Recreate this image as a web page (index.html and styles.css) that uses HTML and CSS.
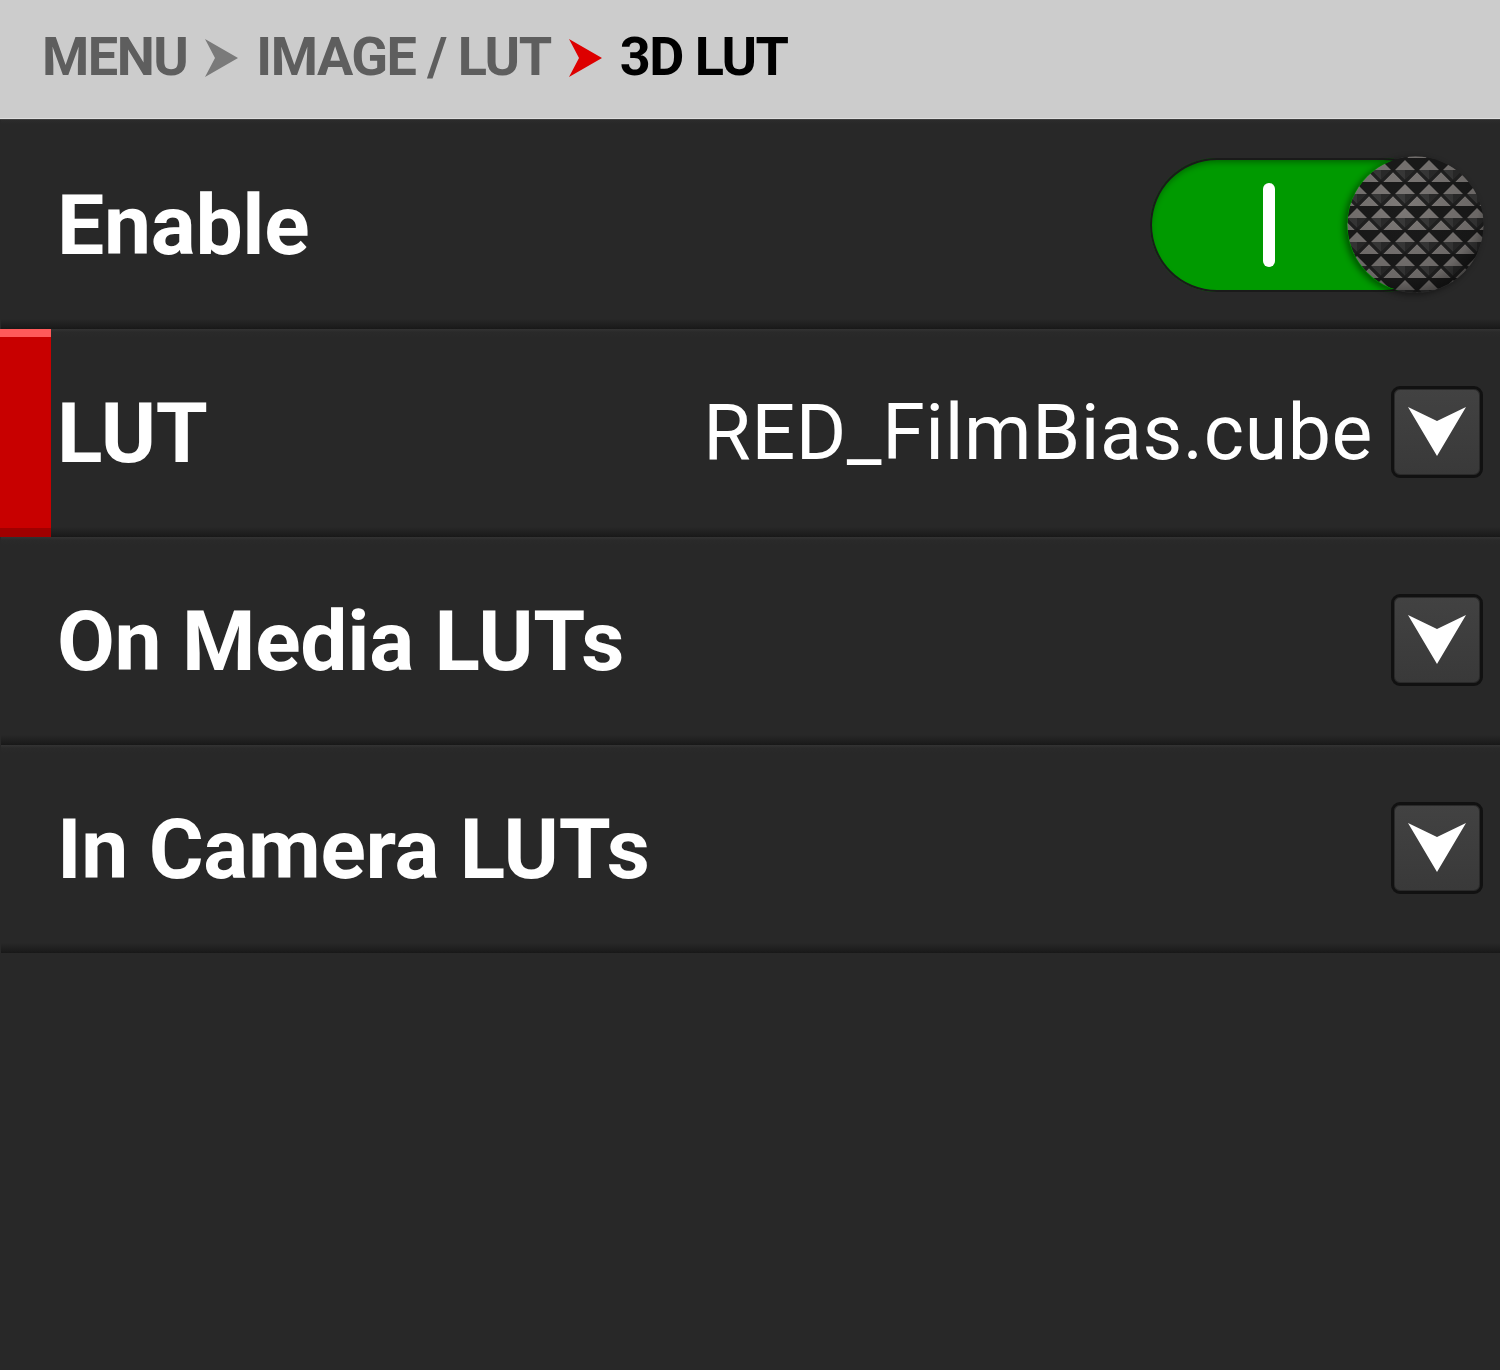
FILE: index.html
```html
<!DOCTYPE html>
<html>
<head>
<meta charset="utf-8">
<link rel="stylesheet" href="styles.css">
</head>
<body>
<div class="screen">
  <header class="crumbs">
    <span class="crumb">MENU</span>
    <svg class="chev" width="33" height="38" viewBox="0 0 33 38"><path d="M0 0 L33 19 L0 38 L10 19 Z" fill="#7a7a7a"/></svg>
    <span class="crumb">IMAGE / LUT</span>
    <svg class="chev" width="33" height="38" viewBox="0 0 33 38"><path d="M0 0 L33 19 L0 38 L10 19 Z" fill="#dd0000"/></svg>
    <span class="crumb current">3D LUT</span>
  </header>
  <div class="rows">
    <div class="row">
      <span class="label">Enable</span>
      <div class="toggle">
        <div class="track"><span class="bar"></span></div>
        <svg class="knob" width="137" height="137" viewBox="0 0 137 137">
          <defs>
            <pattern id="dia" width="24" height="24" patternUnits="userSpaceOnUse" x="-2" y="2">
              <rect width="24" height="24" fill="#1b1b1b"/>
              <path d="M12 2 L22 12 L12 12 L2 12 Z" fill="#7d7977"/>
              <path d="M2 12 L12 12 L12 22 Z" fill="#3a3a3a"/>
              <path d="M22 12 L12 12 L12 22 Z" fill="#2c2c2c"/>
              <path d="M0 -10 L10 0 L0 0 L-10 0 Z M24 -10 L34 0 L24 0 L14 0 Z" fill="#7d7977"/>
              <path d="M-10 24 L0 24 L0 14 Z M10 24 L0 24 L0 14 Z" fill="#333"/>
              <path d="M24 14 L34 24 L24 24 L14 24 Z" fill="#7d7977"/>
              <path d="M14 24 L24 24 L24 34 Z" fill="#3a3a3a"/>
              <path d="M0 14 L10 24 L0 24 L-10 24 Z" fill="#7d7977"/>
              <path d="M12 22 L2 12 L0 14 L10 24 Z M12 22 L22 12 L24 14 L14 24 Z" fill="#222"/>
            </pattern>
            <radialGradient id="shade" cx="40%" cy="35%" r="70%">
              <stop offset="0" stop-color="#000" stop-opacity="0"/>
              <stop offset="0.8" stop-color="#000" stop-opacity="0.15"/>
              <stop offset="1" stop-color="#000" stop-opacity="0.5"/>
            </radialGradient>
          </defs>
          <circle cx="68.5" cy="68.5" r="68" fill="url(#dia)"/>
          <circle cx="68.5" cy="68.5" r="68" fill="url(#shade)"/>
        </svg>
      </div>
    </div>
    <div class="row selected">
      <span class="marker"></span>
      <span class="label">LUT</span>
      <span class="value">RED_FilmBias.cube</span>
      <button class="drop"><svg width="58" height="50" viewBox="0 0 58 50"><path d="M0 0 L29 14 L58 0 L29 49 Z" fill="#fff"/></svg></button>
    </div>
    <div class="row">
      <span class="label">On Media LUTs</span>
      <button class="drop"><svg width="58" height="50" viewBox="0 0 58 50"><path d="M0 0 L29 14 L58 0 L29 49 Z" fill="#fff"/></svg></button>
    </div>
    <div class="row">
      <span class="label">In Camera LUTs</span>
      <button class="drop"><svg width="58" height="50" viewBox="0 0 58 50"><path d="M0 0 L29 14 L58 0 L29 49 Z" fill="#fff"/></svg></button>
    </div>
  </div>
</div>
</body>
</html>
```
FILE: styles.css
```css
html, body {
  margin: 0;
  padding: 0;
  background: #282828;
}
.screen {
  width: 1500px;
  height: 1370px;
  background: #282828;
  font-family: Roboto, "Liberation Sans", sans-serif;
  overflow: hidden;
}
.crumbs {
  height: 118px;
  background: #cccccc;
  border-bottom: 1px solid #dedede;
  box-shadow: 0 1px 0 #3e3e3e;
  display: flex;
  align-items: center;
  padding-left: 42px;
  gap: 18px;
  box-sizing: content-box;
}
.crumb {
  font-size: 54px;
  font-weight: 700;
  color: #5e5e5e;
  letter-spacing: -1.5px;
  line-height: 1;
  margin-top: -4px;
}
.crumb.current {
  color: #000;
}
.chev {
  display: block;
  margin-top: -3px;
}
.rows {
  margin-top: 1px;
  display: flex;
  flex-direction: column;
}
.row {
  position: relative;
  height: 208px;
  box-sizing: border-box;
  display: flex;
  align-items: center;
  padding: 0 17px 0 56px;
  background: linear-gradient(to bottom, #333 0px, #2a2a2a 3px, #282828 8px, #282828 198px, #1f1f1f 204px, #181818 208px);
  margin-left: 1px;
}
.row:first-child {
  height: 209px;
  background: linear-gradient(to bottom, #2c2c2c 0px, #282828 4px, #282828 199px, #1f1f1f 205px, #181818 209px);
}
.label {
  font-size: 84px;
  font-weight: 700;
  color: #fff;
  line-height: 1;
  flex: 1;
  letter-spacing: -0.3px;
  margin-top: 2px;
}
.value {
  font-size: 77px;
  font-weight: 400;
  color: #fff;
  line-height: 1;
  margin-right: 18px;
  letter-spacing: 0.6px;
}
.marker {
  position: absolute;
  left: -1px;
  top: 0;
  width: 51px;
  height: 208px;
  background: linear-gradient(to bottom, #ff5a5a 0, #ff5a5a 8px, #c80000 8px, #c80000 199px, #a00000 199px);
}
.drop {
  width: 92px;
  height: 92px;
  box-sizing: border-box;
  border: 3px solid #111;
  border-radius: 9px;
  background: linear-gradient(to bottom, #424242, #393939);
  box-shadow: inset 0 0 0 1px #2a2a2a;
  display: flex;
  align-items: center;
  justify-content: center;
  padding: 0;
  margin-top: -2px;
}
.drop svg {
  display: block;
}
.toggle {
  position: relative;
  width: 334px;
  height: 138px;
  margin-right: -1px;
}
.track {
  position: absolute;
  left: 0;
  top: 2px;
  width: 300px;
  height: 134px;
  border-radius: 67px;
  background: #009a00;
  box-shadow: inset 0 0 0 2px #1a1a1a, inset 0 4px 6px rgba(0,0,0,0.35);
}
.bar {
  position: absolute;
  left: 113px;
  top: 25px;
  width: 12px;
  height: 84px;
  border-radius: 6px;
  background: #fff;
}
.knob {
  position: absolute;
  right: 0;
  top: 0;
  border-radius: 50%;
  box-shadow: -3px 2px 6px rgba(0,0,0,0.45);
}
```
